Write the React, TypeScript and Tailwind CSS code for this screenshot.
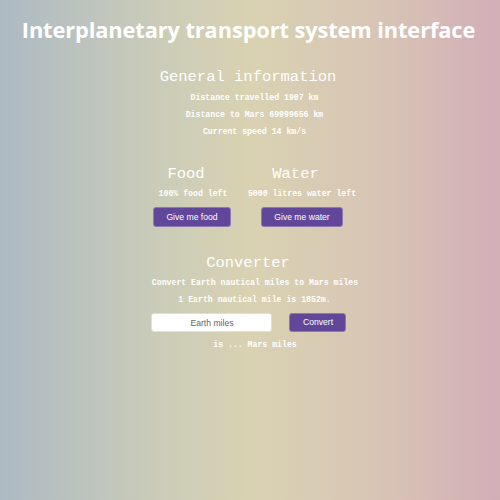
import React from "react";

const mono = { fontFamily: '"Liberation Mono", "Courier New", monospace' };
const sans = { fontFamily: '"Liberation Sans", Arial, sans-serif' };

export default function App() {
  return (
    <div
      className="w-[500px] h-[500px] flex flex-col items-center text-white overflow-hidden"
      style={{ background: "linear-gradient(90deg, #adbac3 0%, #c9cbb9 30%, #d9d2b2 50%, #d8c5b5 75%, #d2aeb7 100%)" }}
    >
      <h1 className="mt-[15px] pr-[3px] text-[21.8px] leading-[30px] font-bold tracking-[-0.1px] whitespace-nowrap" style={{ fontFamily: "'Open Sans', Lato, sans-serif" }}>
        Interplanetary transport system interface
      </h1>

      <div className="mt-[24px] flex flex-col items-center whitespace-nowrap" style={mono}>
        <h2 className="pr-[4px] text-[15.5px] leading-[16px]">General information</h2>
        <p className="mt-[8px] pl-[9px] text-[8.2px] leading-[10px] font-bold">Distance travelled 1907 km</p>
        <p className="mt-[7px] pl-[9px] text-[8.2px] leading-[10px] font-bold">Distance to Mars 69999656 km</p>
        <p className="mt-[7px] pl-[9px] text-[8.2px] leading-[10px] font-bold">Current speed 14 km/s</p>
      </div>

      <div className="mt-[29px] flex gap-[18px] pl-[8px] whitespace-nowrap" style={mono}>
        <div className="w-[78px] flex flex-col items-center">
          <h2 className="pr-[12px] text-[15.5px] leading-[16px]">Food</h2>
          <p className="mt-[7px] pl-[2px] text-[8.2px] leading-[10px] font-bold">100% food left</p>
          <button
            className="mt-[8px] w-[78px] h-[20px] rounded-[3px] bg-[#61479a] border border-[#8e77b2] text-[8.6px] font-medium"
            style={sans}
          >
            Give me food
          </button>
        </div>
        <div className="w-[106px] flex flex-col items-center">
          <h2 className="pr-[13px] text-[15.5px] leading-[16px]">Water</h2>
          <p className="mt-[7px] text-[8.2px] leading-[10px] font-bold">5000 litres water left</p>
          <button
            className="mt-[8px] w-[82px] h-[20px] rounded-[3px] bg-[#61479a] border border-[#8e77b2] text-[8.6px] font-medium"
            style={sans}
          >
            Give me water
          </button>
        </div>
      </div>

      <div className="mt-[28px] flex flex-col items-center whitespace-nowrap" style={mono}>
        <h2 className="pr-[4px] text-[15.5px] leading-[16px]">Converter</h2>
        <p className="mt-[7px] pl-[10px] text-[8.2px] leading-[10px] font-bold">Convert Earth nautical miles to Mars miles</p>
        <p className="mt-[7px] pl-[9px] text-[8.2px] leading-[10px] font-bold">1 Earth nautical mile is 1852m.</p>
        <div className="mt-[8px] pr-[2px] flex items-center gap-[17px]">
          <input
            placeholder="Earth miles"
            className="w-[121px] h-[19px] rounded-[3px] bg-white border border-[#e6dfcf] text-center text-[8.6px] text-[#555] placeholder:text-[#666] outline-none"
            style={sans}
          />
          <button
            className="w-[57px] h-[19px] rounded-[3px] bg-[#61479a] border border-[#8e77b2] text-[8.6px] font-medium"
            style={sans}
          >
            Convert
          </button>
        </div>
        <p className="mt-[8px] pl-[10px] text-[8.2px] leading-[10px] font-bold">is ... Mars miles</p>
      </div>
    </div>
  );
}
